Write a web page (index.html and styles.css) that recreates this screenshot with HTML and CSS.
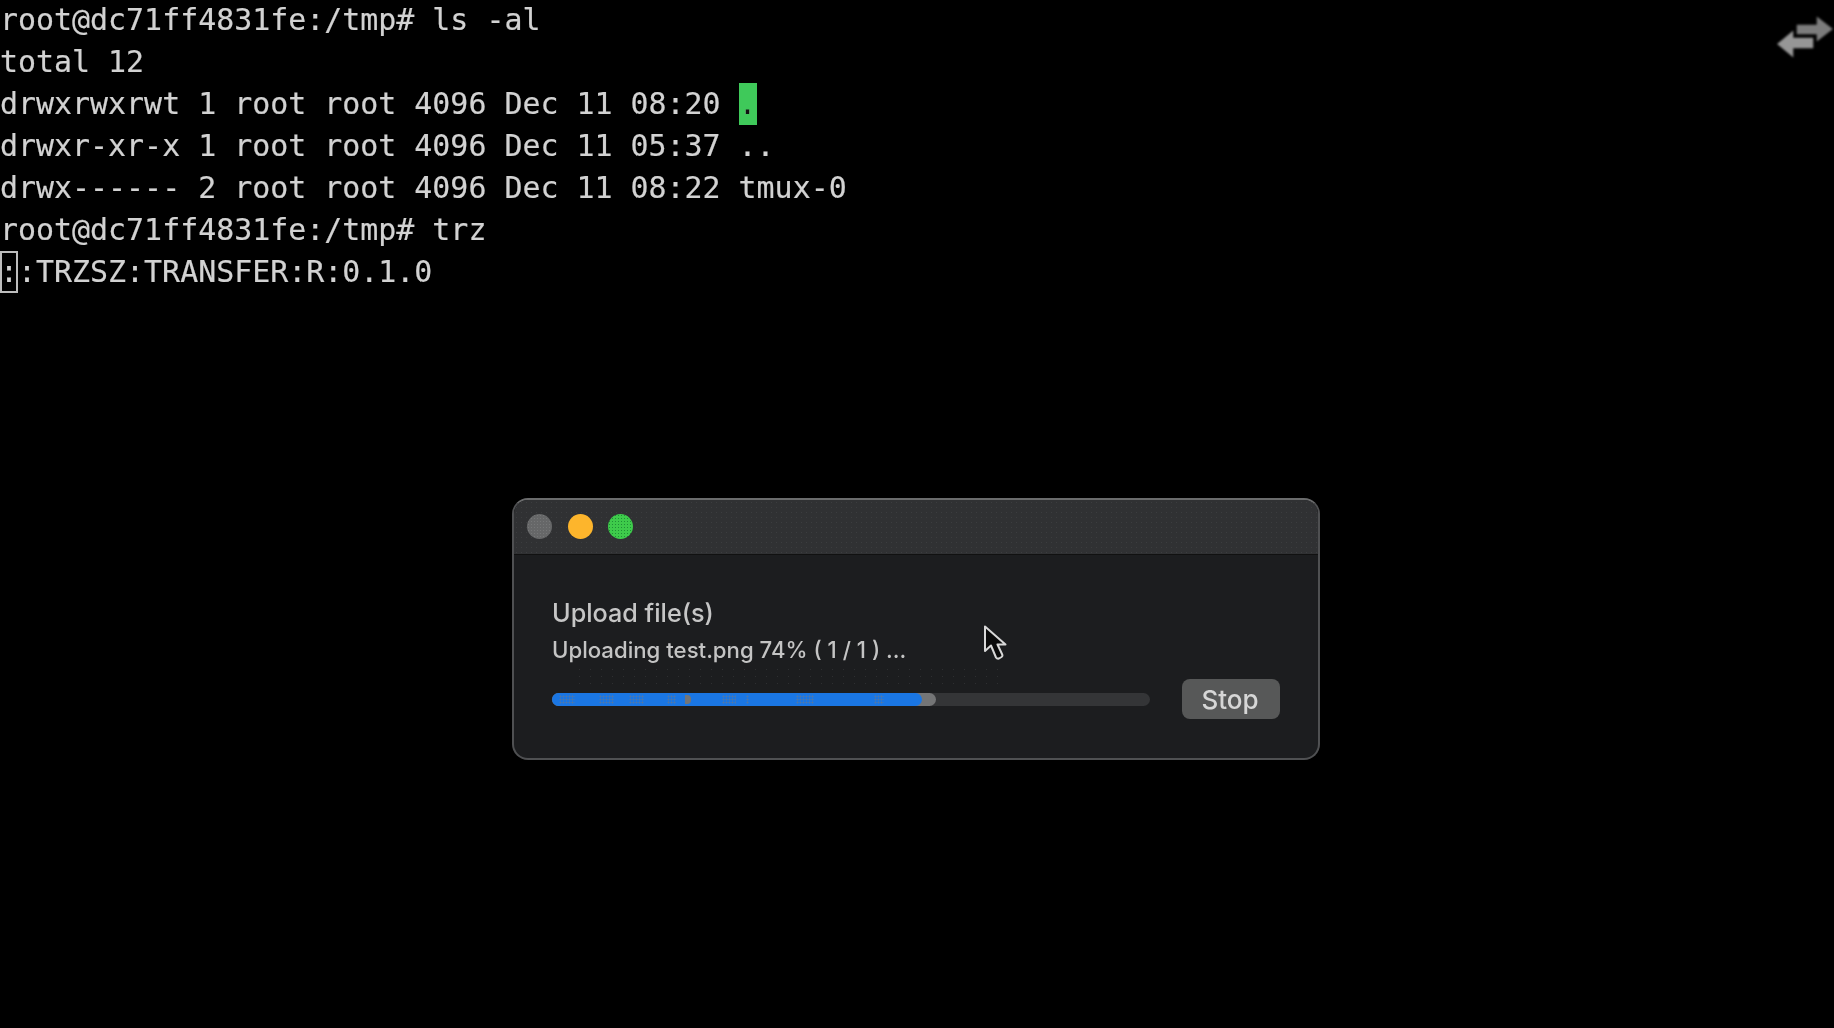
FILE: index.html
```html
<!DOCTYPE html>
<html lang="en">
<head>
<meta charset="utf-8">
<title>trzsz upload</title>
<link rel="stylesheet" href="styles.css">
</head>
<body>
<main class="terminal">
<div class="line">root@dc71ff4831fe:/tmp# ls -al</div>
<div class="line">total 12</div>
<div class="line">drwxrwxrwt 1 root root 4096 Dec 11 08:20 <span class="dir-hl">.</span></div>
<div class="line">drwxr-xr-x 1 root root 4096 Dec 11 05:37 ..</div>
<div class="line">drwx------ 2 root root 4096 Dec 11 08:22 tmux-0</div>
<div class="line">root@dc71ff4831fe:/tmp# trz</div>
<div class="line"><span class="box">:</span>:TRZSZ:TRANSFER:R:0.1.0</div>
</main>

<svg class="swap-icon" viewBox="0 0 60 46" width="60" height="46" aria-hidden="true">
  <path class="swap-back" d="M22 10 H42 V1 L60 15 L42 29 V21 H22 Z"/>
  <path class="swap-front" d="M40 23 H20 V15 L2 30 L20 45 V35 H40 Z"/>
</svg>

<section class="dialog">
  <header class="titlebar">
    <span class="light light-gray"></span>
    <span class="light light-yellow"></span>
    <span class="light light-green"></span>
  </header>
  <div class="body">
    <div class="title">Upload file(s)</div>
    <div class="status">Uploading test.png 74% ( 1 / 1 ) ...</div>
    <div class="noise"></div>
    <div class="controls">
      <div class="track">
        <div class="buffer">
          <div class="fill">
            <span class="patch" style="left:7px;width:16px"></span>
            <span class="patch" style="left:47px;width:15px"></span>
            <span class="patch" style="left:77px;width:15px"></span>
            <span class="patch" style="left:115px;width:9px"></span>
            <span class="patch patch-solid" style="left:133px;width:6px"></span>
            <span class="patch" style="left:170px;width:14px"></span>
            <span class="patch" style="left:194px;width:3px"></span>
            <span class="patch" style="left:244px;width:18px"></span>
            <span class="patch" style="left:322px;width:10px"></span>
          </div>
        </div>
      </div>
      <button class="stop">Stop</button>
    </div>
  </div>
</section>

<svg class="cursor" viewBox="0 0 24 36" width="24" height="36" aria-hidden="true">
  <path d="M2 1.5 V26 L8 20.5 L13 32.5 Q14 34 16 33.5 L18.5 32 Q20 31 19 29 L14.5 19.5 H22.5 Z"/>
</svg>
</body>
</html>
```
FILE: styles.css
```css
* { box-sizing: border-box; }
html, body { margin: 0; height: 100%; }
body {
  background: #000;
  width: 1834px;
  height: 1028px;
  overflow: hidden;
  position: relative;
}
.terminal {
  font-family: "DejaVu Sans Mono", monospace;
  font-size: 29.93px;
  color: #d2d2d2;
  filter: blur(0.55px);
  margin-top: -1px;
  -webkit-text-stroke: 0.2px #d2d2d2;
}
.line {
  height: 42px;
  line-height: 42px;
  white-space: pre;
}
.dir-hl {
  display: inline-block;
  width: 18px;
  height: 42px;
  background: #3fc95a;
  color: #111;
  vertical-align: top;
}
.box {
  display: inline-block;
  width: 18px;
  height: 42px;
  border: 2px solid #bdbdbd;
  line-height: 38px;
  vertical-align: top;
  text-indent: -2px;
}
.swap-icon {
  position: absolute;
  left: 1774px;
  top: 14px;
  filter: blur(1.2px);
}
.swap-back { fill: #7c7c7c; stroke: #000; stroke-width: 1.5; }
.swap-front { fill: #969696; stroke: #000; stroke-width: 1.5; }

.dialog {
  position: absolute;
  left: 512px;
  top: 498px;
  width: 808px;
  height: 262px;
  background: #1c1d1f;
  border: 2px solid #4f5052;
  border-top-color: #6a6b6c;
  border-radius: 16px;
  overflow: hidden;
  font-family: Inter, "Liberation Sans", sans-serif;
}
.titlebar {
  height: 54px;
  background-color: #303133;
  background-image: radial-gradient(circle, #3c3d3f 0.7px, transparent 0.9px);
  background-size: 5px 5px;
  display: flex;
  align-items: center;
  gap: 15.5px;
  padding: 0 0 2px 13px;
  box-shadow: 0 1px 0 #111;
}
.light {
  width: 25px;
  height: 25px;
  border-radius: 50%;
}
.light-gray {
  background-color: #666768;
  background-image: radial-gradient(circle, #767778 0.6px, transparent 0.9px);
  background-size: 3px 3px;
}
.light-yellow { background: #fdb52c; }
.light-green {
  background-color: #3ecb4b;
  background-image: radial-gradient(circle, #1f8f35 0.6px, transparent 0.9px);
  background-size: 3px 3px;
}
.body {
  position: relative;
  padding: 43px 38px 0 38px;
}
.title {
  font-size: 25.2px;
  font-weight: 500;
  line-height: 32px;
  color: #c6c6c6;
  filter: blur(0.6px);
}
.status {
  margin-top: 8px;
  font-size: 22.2px;
  font-weight: 500;
  line-height: 26px;
  color: #c4c4c4;
  filter: blur(0.6px);
}
.noise {
  position: absolute;
  left: 60px;
  right: 310px;
  top: 112px;
  height: 22px;
  background-image: radial-gradient(circle, #2e2f31 0.6px, transparent 0.9px);
  background-size: 11px 7px;
}
.controls {
  display: flex;
  align-items: center;
  margin-top: 16px;
  gap: 32px;
}
.track {
  flex: 1;
  height: 13px;
  border-radius: 7px;
  background: #343537;
}
.buffer {
  width: 384px;
  height: 13px;
  padding-right: 14px;
  border-radius: 7px;
  background: #747576;
}
.fill {
  position: relative;
  height: 13px;
  border-radius: 7px;
  background: #1a76e3;
}
.patch {
  position: absolute;
  top: 2px;
  height: 9px;
  background-image: radial-gradient(circle, #4f77a8 0.9px, transparent 1.1px);
  background-size: 3px 3px;
}
.patch-solid {
  background: #747576;
  border-radius: 0 4px 4px 0;
}
.stop {
  width: 98px;
  height: 40px;
  padding: 0 2px 0 0;
  border: none;
  border-radius: 8px;
  background: #575858;
  color: #d6d6d6;
  font-family: inherit;
  font-size: 26px;
  font-weight: 500;
  filter: blur(0.5px);
}
.cursor {
  position: absolute;
  left: 983px;
  top: 625px;
  filter: blur(0.4px);
}
.cursor path {
  fill: #0a0a0a;
  stroke: #d8d8d8;
  stroke-width: 2;
  stroke-linejoin: round;
}
```
